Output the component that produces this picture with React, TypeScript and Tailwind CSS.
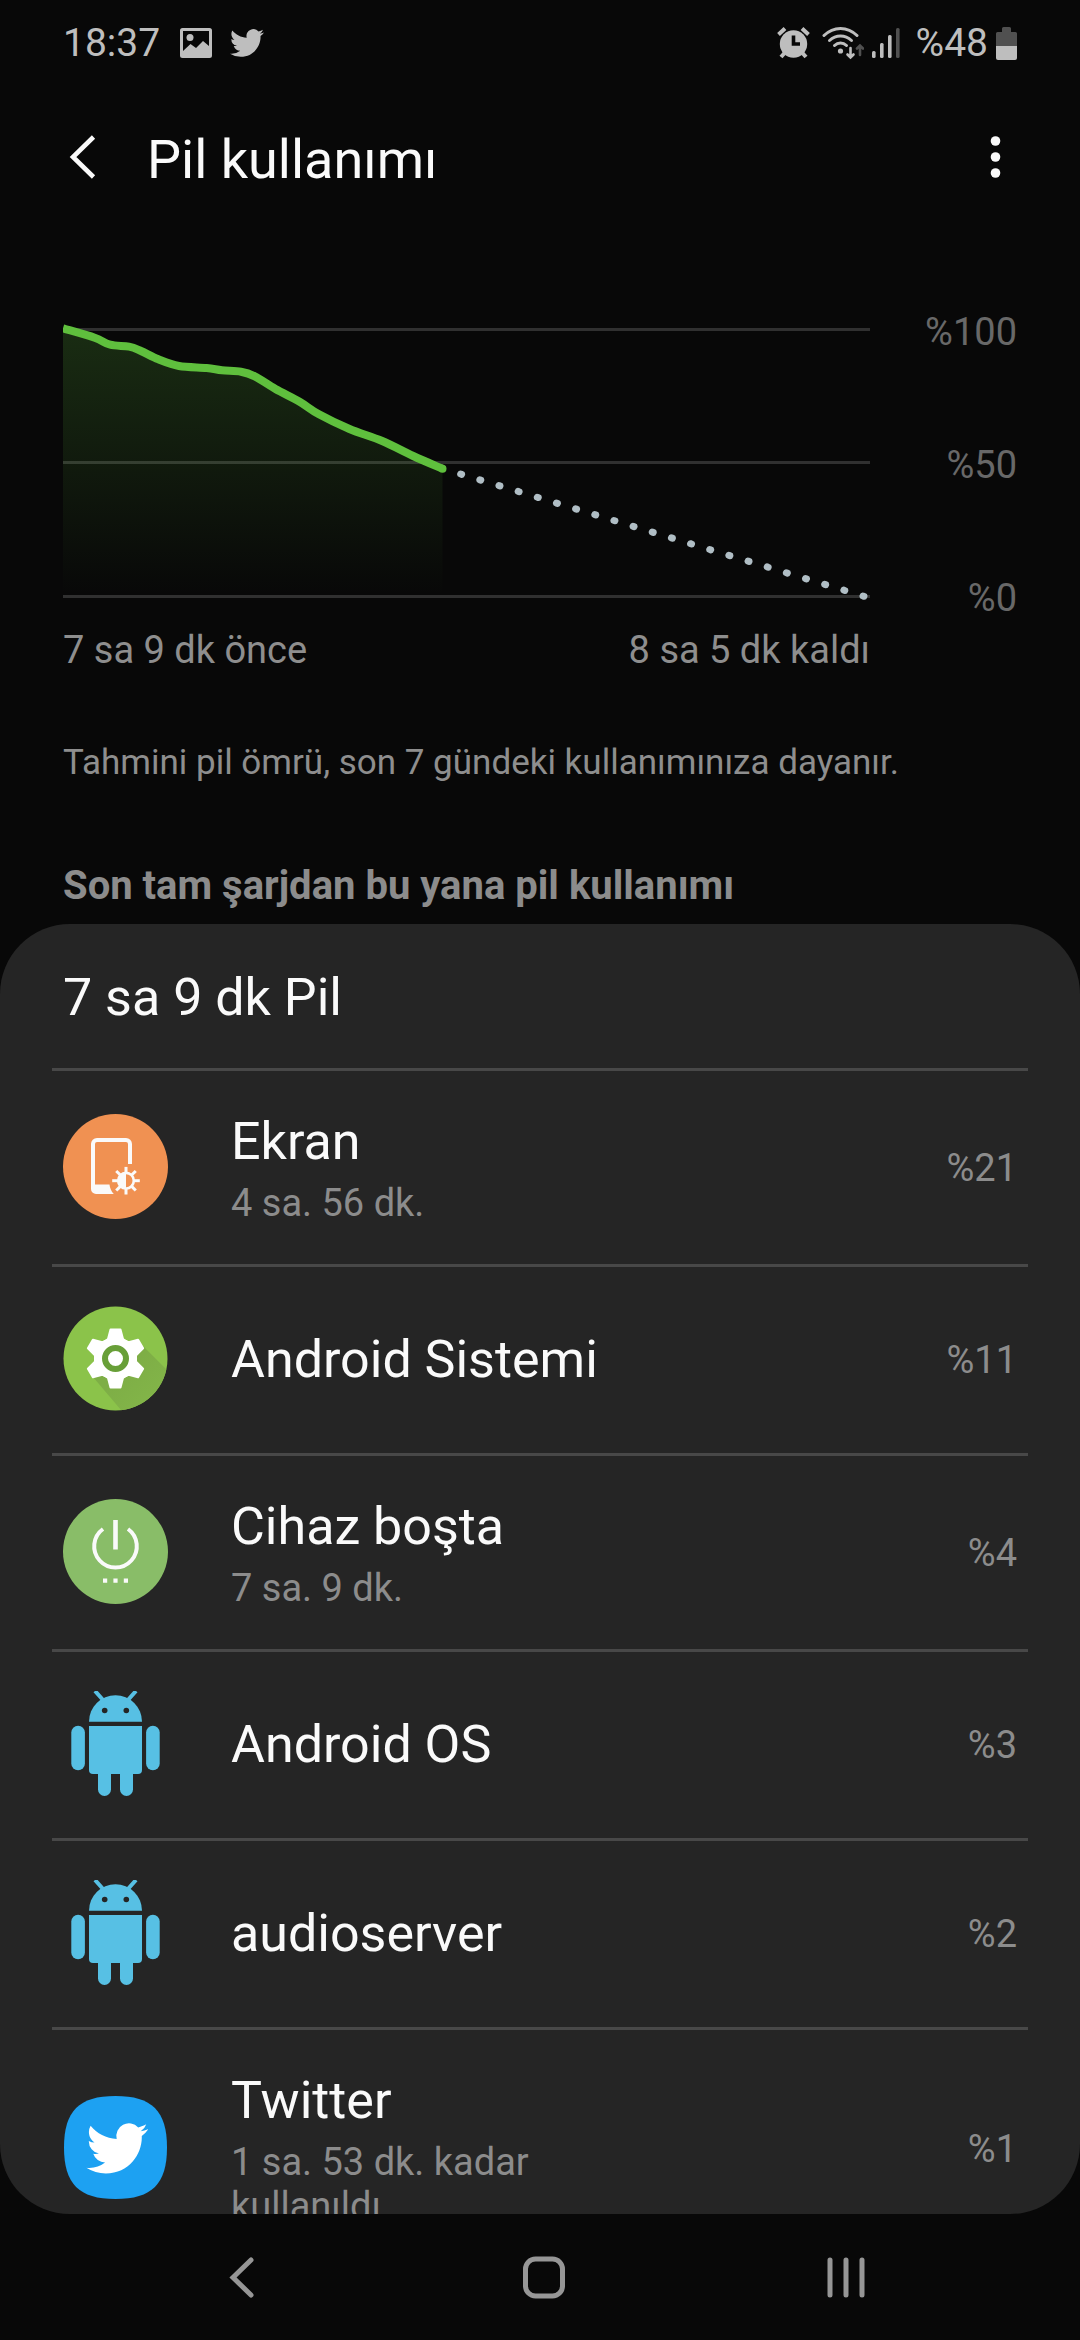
import type { ReactNode } from "react";

interface UsageItem {
  name: string;
  detail?: string;
  percent: string;
  icon: ReactNode;
}

const BIRD =
  "M23.953 4.57a10 10 0 01-2.825.775 4.958 4.958 0 002.163-2.723c-.951.555-2.005.959-3.127 1.184a4.92 4.92 0 00-8.384 4.482C7.69 8.095 4.067 6.13 1.64 3.162a4.822 4.822 0 00-.666 2.475c0 1.71.87 3.213 2.188 4.096a4.904 4.904 0 01-2.228-.616v.06a4.923 4.923 0 003.946 4.827 4.996 4.996 0 01-2.212.085 4.936 4.936 0 004.604 3.417 9.867 9.867 0 01-6.102 2.105c-.39 0-.779-.023-1.17-.067a13.995 13.995 0 007.557 2.209c9.053 0 13.998-7.496 13.998-13.985 0-.21 0-.42-.015-.63A9.935 9.935 0 0024 4.59z";

function ScreenIcon() {
  return (
    <svg viewBox="0 0 105 105" className="size-[105px]">
      <circle cx="52.5" cy="52.5" r="52.5" fill="#f09152" />
      <path d="M67 50V30a4 4 0 0 0-4-4H34a4 4 0 0 0-4 4v44" fill="none" stroke="#fafafa" strokeWidth="4" />
      <path d="M28 70.5h18.5c.3 3.600 1.800 6.800 4.300 9.500H33a5 5 0 0 1-5-5z" fill="#fafafa" />
      <g transform="translate(63 66.7)" stroke="#fafafa">
        {[0, 45, 90, 135, 180, 225, 270, 315].map((a) => (
          <path key={a} d="M0-8v-5.800" strokeWidth="3" transform={`rotate(${a})`} />
        ))}
        <circle r="7.800" fill="none" strokeWidth="2.600" />
        <path d="M0-8a8 8 0 0 0 0 16z" fill="#fafafa" stroke="none" />
      </g>
    </svg>
  );
}

function SystemIcon() {
  return (
    <svg viewBox="0 0 105 105" className="size-[105px]">
      <defs>
        <clipPath id="system-disc">
          <circle cx="52.5" cy="52.5" r="52" />
        </clipPath>
        <linearGradient id="system-shade" x1="0.3" y1="0.3" x2="0.8" y2="0.8">
          <stop offset="0%" stopColor="#7eae46" />
          <stop offset="100%" stopColor="#85b94a" />
        </linearGradient>
      </defs>
      <circle cx="52.5" cy="52.5" r="52" fill="#8bc34a" />
      <path d="M80 40l50 50-50 40-50-59z" fill="url(#system-shade)" clipPath="url(#system-disc)" />
      <g transform="translate(52.5 52.5)" fill="#fff">
        <circle r="21.500" />
        {[0, 60, 120, 180, 240, 300].map((a) => (
          <path
            key={a}
            d="M-5-29H5L7.500-19.500 12-16H-12L-7.500-19.500z"
            stroke="#fff"
            strokeWidth="2"
            strokeLinejoin="round"
            transform={`rotate(${a})`}
          />
        ))}
        <circle r="10.500" fill="#fff" stroke="#689f38" strokeWidth="6" />
      </g>
    </svg>
  );
}

function IdleIcon() {
  return (
    <svg viewBox="0 0 105 105" className="size-[105px]">
      <circle cx="52.5" cy="52.5" r="52.5" fill="#89bd68" />
      <g fill="none" stroke="#fafafa" strokeWidth="4">
        <path d="M40 30a21.300 21.300 0 1 0 25 0" />
        <path d="M52.500 21v29.500" strokeWidth="4.600" />
      </g>
      <path d="M40 79.500h4.200v4.200H40zM50.400 79.500h4.200v4.200h-4.200zM60.800 79.500H65v4.200h-4.200z" fill="#fafafa" />
    </svg>
  );
}

function AndroidIcon() {
  return (
    <svg viewBox="0 0 105 105" className="size-[105px]" fill="#57c0e4">
      <path d="M32 0l8.500 9.500M73 0l-8.500 9.500" stroke="#57c0e4" strokeWidth="4" />
      <path d="M26 30.700a26.500 26.500 0 0 1 53 0z" />
      <path d="M26 35h53v44a4 4 0 0 1-4 4H30a4 4 0 0 1-4-4z" />
      <rect x="8.300" y="34.700" width="13.600" height="44.500" rx="6.800" />
      <rect x="83.100" y="34.700" width="13.600" height="44.500" rx="6.800" />
      <path d="M35 80h13v18.500a6.500 6.500 0 0 1-13 0zM57 80h13v18.500a6.500 6.500 0 0 1-13 0z" />
      <circle cx="41.700" cy="19.500" r="2.800" fill="#252525" />
      <circle cx="63.300" cy="19.500" r="2.800" fill="#252525" />
    </svg>
  );
}

function TwitterIcon() {
  return (
    <svg viewBox="0 0 105 105" className="size-[105px]">
      <path
        d="M52.500 1C89 1 104 16 104 52.500S89 104 52.500 104 1 89 1 52.500 16 1 52.500 1z"
        fill="#1da1f2"
      />
      <path d={BIRD} fill="#fff" transform="translate(23.400 22.600) scale(2.570)" />
    </svg>
  );
}

const items: UsageItem[] = [
  { name: "Ekran", detail: "4 sa. 56 dk.", percent: "%21", icon: <ScreenIcon /> },
  { name: "Android Sistemi", percent: "%11", icon: <SystemIcon /> },
  { name: "Cihaz boşta", detail: "7 sa. 9 dk.", percent: "%4", icon: <IdleIcon /> },
  { name: "Android OS", percent: "%3", icon: <AndroidIcon /> },
  { name: "audioserver", percent: "%2", icon: <AndroidIcon /> },
  { name: "Twitter", detail: "1 sa. 53 dk. kadar kullanıldı", percent: "%1", icon: <TwitterIcon /> },
];

// battery level samples, in chart units
const levels: [number, number][] = [
  [0, 18.3], [31.7, 27.7], [47.2, 34.7], [66, 36.7], [78, 41], [95.4, 49.3],
  [116, 56], [143.6, 58], [159, 60.3], [178, 61.7], [191.8, 66.3], [212.5, 79],
  [236.6, 91.7], [255.5, 104], [286.5, 119], [319.2, 131], [350.2, 146], [379.5, 158.7],
];

// Catmull-Rom through the samples
function smoothPath(pts: [number, number][]) {
  let d = `M${pts[0][0]} ${pts[0][1]}`;
  for (let i = 0; i < pts.length - 1; i++) {
    const p0 = pts[i - 1] || pts[i];
    const p1 = pts[i];
    const p2 = pts[i + 1];
    const p3 = pts[i + 2] || p2;
    d += `C${p1[0] + (p2[0] - p0[0]) / 6} ${p1[1] + (p2[1] - p0[1]) / 6} ${p2[0] - (p3[0] - p1[0]) / 6} ${
      p2[1] - (p3[1] - p1[1]) / 6
    } ${p2[0]} ${p2[1]}`;
  }
  return d;
}

function BatteryChart() {
  const line = smoothPath(levels);

  return (
    <div className="flex">
      <div className="flex-1">
        <svg viewBox="0 0 807 310" className="block w-full">
          <defs>
            <linearGradient id="level-fill" gradientUnits="userSpaceOnUse" x1="0" y1="18" x2="0" y2="285">
              <stop offset="0%" stopColor="#5fbf3d" stopOpacity="0.2" />
              <stop offset="100%" stopColor="#5fbf3d" stopOpacity="0" />
            </linearGradient>
          </defs>
          <path d="M0 19.500h807M0 152.500h807M0 286.500h807" stroke="#303030" strokeWidth="3" />
          <path d={`${line}V285H0z`} fill="url(#level-fill)" />
          <path
            d="M378.500 158.200L801 286.300"
            stroke="#b0bec5"
            strokeWidth="7"
            strokeLinecap="round"
            strokeDasharray="1 19.020"
          />
          <path d={line} fill="none" stroke="#5fbf3d" strokeWidth="8" />
          <circle cx="379.5" cy="158.7" r="4" fill="#5fbf3d" />
        </svg>
        <div className="mt-2 flex justify-between text-[38px] leading-[44px] text-[#8e8e8e]">
          <span>7 sa 9 dk önce</span>
          <span>8 sa 5 dk kaldı</span>
        </div>
      </div>
      <div className="flex h-[310px] w-[147px] flex-col justify-between text-right text-[38px] leading-[44px] text-[#686868]">
        <span>%100</span>
        <span>%50</span>
        <span>%0</span>
      </div>
    </div>
  );
}

function StatusBar() {
  return (
    <div className="flex h-[86px] items-center justify-between px-[63px] text-[39px] text-[#bebebe]">
      <div className="flex items-center">
        <span>18:37</span>
        <svg viewBox="0 0 32 30" className="ml-5 h-[30px] w-8" fill="currentColor">
          <path
            fillRule="evenodd"
            d="M2.500 0h27A2.500 2.500 0 0 1 32 2.500v25a2.500 2.500 0 0 1-2.500 2.500h-27A2.500 2.500 0 0 1 0 27.500v-25A2.500 2.500 0 0 1 2.500 0zM3 3v20l7.500-7 5.500 4 7-7 6 5V3z"
          />
          <circle cx="10" cy="9.500" r="3.500" />
        </svg>
        <svg viewBox="0 0 24 24" className="ml-[18px] size-[34px]" fill="currentColor">
          <path d={BIRD} />
        </svg>
      </div>
      <div className="flex items-center">
        <svg viewBox="0 0 33 32" className="h-8 w-[33px]" fill="currentColor">
          <path d="M1.500 7.500l6.500-6M31.500 7.500l-6.500-6" stroke="currentColor" strokeWidth="4" />
          <path d="M4 30l4-4.500M29 30l-4-4.500" stroke="currentColor" strokeWidth="4" />
          <circle cx="16.500" cy="17" r="13.700" />
          <path d="M16.500 8.500v8.500h6.500" fill="none" stroke="#080808" strokeWidth="3.600" />
        </svg>
        <svg viewBox="0 0 42 34" className="ml-3 h-[34px] w-[42px]" fill="none" strokeLinecap="round">
          <g stroke="currentColor" strokeWidth="3">
            <path d="M2 9.500c9.500-9.500 23.500-9.500 33 0" />
            <path d="M7.500 14.500c6.500-6 15.500-6 22 0" />
            <path d="M12.500 19.500c3.500-3.500 8.500-3.500 12 0" />
            <path d="M28.500 22v9M25.500 28.500l3 3 3-3" strokeWidth="2.600" />
          </g>
          <circle cx="18.500" cy="25" r="2.600" fill="currentColor" />
          <path d="M38 29v-9M35 22.500l3-3 3 3" stroke="#505050" strokeWidth="2.600" />
        </svg>
        <svg viewBox="0 0 28 30" className="ml-2 h-[30px] w-7" fill="currentColor">
          <rect x="0" y="23" width="3.600" height="7" rx="1.500" />
          <rect x="8" y="15" width="3.600" height="15" rx="1.500" />
          <rect x="16" y="7" width="3.600" height="23" rx="1.500" />
          <rect x="24" y="0" width="3.600" height="30" rx="1.500" fill="#505050" />
        </svg>
        <span className="ml-4">%48</span>
        <svg viewBox="0 0 21 33" className="ml-2 h-[33px] w-[21px]">
          <path d="M6 5V1.500A1.500 1.500 0 0 1 7.500 0h6A1.500 1.500 0 0 1 15 1.500V5h4.500A1.500 1.500 0 0 1 21 6.500V19H0V6.500A1.500 1.500 0 0 1 1.500 5z" fill="#505050" />
          <path d="M0 19h21v12a2 2 0 0 1-2 2H2a2 2 0 0 1-2-2z" fill="currentColor" />
        </svg>
      </div>
    </div>
  );
}

function UsageRow({ item }: { item: UsageItem }) {
  return (
    <li className="flex items-center border-t-[3px] border-[#484848] px-[11px] py-[39px]">
      <div className="shrink-0 pb-[3px]">{item.icon}</div>
      <div className="ml-[63px] flex-1">
        <h3 className="text-[52px] leading-[64px] text-[#fafafa]">{item.name}</h3>
        {item.detail && (
          <p className="mt-[7px] max-w-96 text-[38px] leading-[44px] text-[#8c8c8c]">{item.detail}</p>
        )}
      </div>
      <span className="text-[38px] leading-[44px] text-[#8c8c8c]">{item.percent}</span>
    </li>
  );
}

export default function App() {
  return (
    <div className="flex h-screen flex-col overflow-hidden bg-[#080808] font-['Roboto',sans-serif]">
      <StatusBar />

      <header className="flex h-[148px] items-center px-[63px] text-[#fafafa]">
        <button aria-label="Geri" className="pb-[6px]">
          <svg viewBox="0 0 40 44" className="h-11 w-10" fill="none" stroke="currentColor" strokeWidth="4.600">
            <path d="M30.500 2L10 22l20.500 20" />
          </svg>
        </button>
        <h1 className="ml-11 flex-1 text-[54px] leading-[64px]">Pil kullanımı</h1>
        <button aria-label="Diğer seçenekler" className="pb-[6px]">
          <svg viewBox="0 0 44 44" className="size-11" fill="currentColor">
            <circle cx="22.5" cy="6" r="4.800" />
            <circle cx="22.5" cy="22" r="4.800" />
            <circle cx="22.5" cy="38" r="4.800" />
          </svg>
        </button>
      </header>

      <section className="px-[63px] pt-[76px]">
        <BatteryChart />
        <p className="mt-[70px] text-[35px] leading-[42px] text-[#8e8e8e]">
          Tahmini pil ömrü, son 7 gündeki kullanımınıza dayanır.
        </p>
        <h2 className="mt-20 mb-4 text-[40px] leading-[44px] font-bold text-[#8c8c8c]">
          Son tam şarjdan bu yana pil kullanımı
        </h2>
      </section>

      <main className="min-h-0 flex-1 overflow-hidden rounded-[70px] bg-[#252525] px-[52px]">
        <h2 className="px-[11px] pt-[42px] pb-[38px] text-[52px] leading-[64px] text-[#fafafa]">7 sa 9 dk Pil</h2>
        <ul>
          {items.map((item) => (
            <UsageRow key={item.name} item={item} />
          ))}
        </ul>
      </main>

      <nav className="grid h-[126px] shrink-0 grid-cols-3 place-items-center pr-[83px] pl-[91px] text-[#969696]">
        <button aria-label="Geri">
          <svg viewBox="0 0 44 44" className="size-11" fill="none" stroke="currentColor" strokeWidth="5" strokeLinecap="round">
            <path d="M31 5L13 22.500 31 40" />
          </svg>
        </button>
        <button aria-label="Ana ekran">
          <svg viewBox="0 0 44 44" className="size-11" fill="none" stroke="currentColor" strokeWidth="5">
            <rect x="3.500" y="4" width="37" height="37" rx="10" />
          </svg>
        </button>
        <button aria-label="Son uygulamalar">
          <svg viewBox="0 0 44 44" className="size-11" fill="none" stroke="currentColor" strokeWidth="5" strokeLinecap="round">
            <path d="M6 5v35M22 5v35M38 5v35" />
          </svg>
        </button>
      </nav>
    </div>
  );
}
